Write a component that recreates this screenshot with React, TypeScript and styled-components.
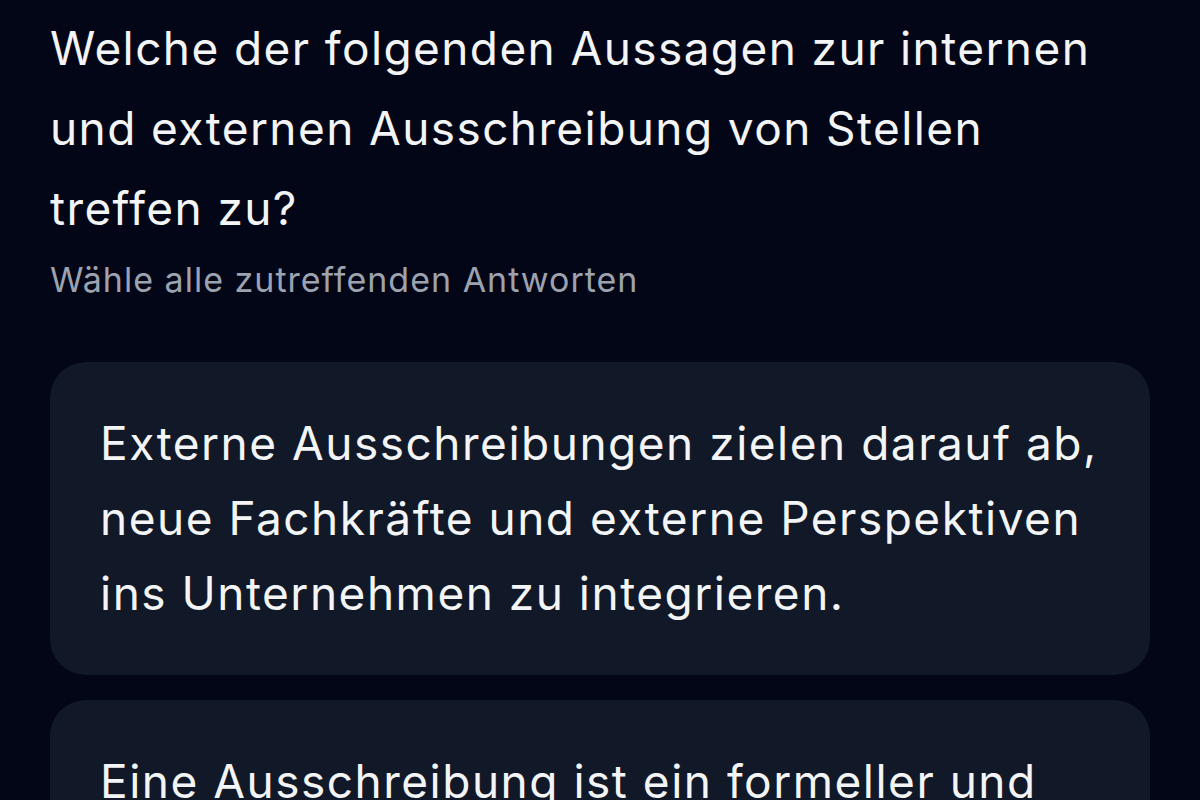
import styled, { createGlobalStyle } from 'styled-components';

const GlobalStyle = createGlobalStyle`
  html, body {
    margin: 0;
    padding: 0;
    background: #030616;
  }
  body {
    font-family: Inter, "Noto Sans", sans-serif;
    color: #f3f4f6;
  }
`

const Page = styled.div`
  padding: 8px 50px 0 50px;
  height: 800px;
  overflow: hidden;
  box-sizing: border-box;
`

const Question = styled.h1`
  margin: 0;
  font-size: 46px;
  font-weight: 400;
  line-height: 80px;
  letter-spacing: 1.4px;
  color: #f3f4f6;
`

const Hint = styled.p`
  margin: 10px 0 0 0;
  font-size: 34px;
  line-height: 44px;
  letter-spacing: 1px;
  color: #9ca3af;
`

const Options = styled.div`
  margin-top: 60px;
  display: flex;
  flex-direction: column;
  gap: 25px;
`

const Option = styled.div`
  background: #111827;
  border-radius: 36px;
  padding: 44px 40px 44px 50px;
  font-size: 46px;
  line-height: 75px;
  letter-spacing: 1.5px;
  color: #f3f4f6;
`

interface QuizProps {
  question: string,
  hint: string,
  answers: string[],
}

const Quiz = (props: QuizProps) => {
  const { question, hint, answers } = props;

  return (
    <Page>
      <Question>{question}</Question>
      <Hint>{hint}</Hint>
      <Options>
        {answers.map((answer) => (
          <Option key={answer}>{answer}</Option>
        ))}
      </Options>
    </Page>
  )
}

const App = () => (
  <>
    <GlobalStyle />
    <Quiz
      question="Welche der folgenden Aussagen zur internen und externen Ausschreibung von Stellen treffen zu?"
      hint="Wähle alle zutreffenden Antworten"
      answers={[
        'Externe Ausschreibungen zielen darauf ab, neue Fachkräfte und externe Perspektiven ins Unternehmen zu integrieren.',
        'Eine Ausschreibung ist ein formeller und rechtlich bindender Vorgang.',
      ]}
    />
  </>
)

export default App;
